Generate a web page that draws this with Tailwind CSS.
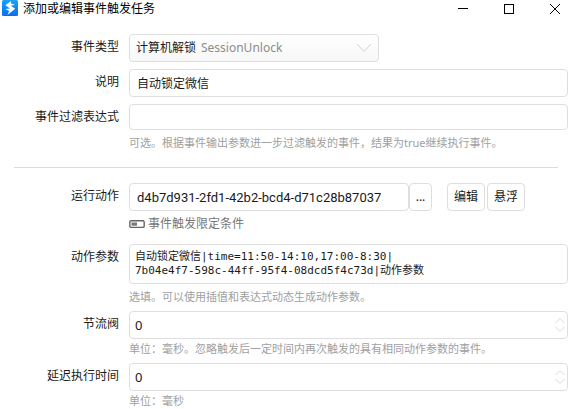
<!DOCTYPE html>
<html lang="zh-CN">
<head>
  <meta charset="UTF-8" />
  <meta name="viewport" content="width=device-width, initial-scale=1" />
  <title>添加或编辑事件触发任务</title>
  <script src="https://cdn.jsdelivr.net/npm/@tailwindcss/browser@4"></script>
</head>
<body class="bg-white text-[#1a1a1a] text-xs font-['Noto_Sans','Noto_Sans_CJK_SC',sans-serif] overflow-x-hidden">

  <!-- Barra de título -->
  <header class="flex items-center h-[18px] pl-[2px] text-black">
    <svg class="w-4 h-4 mb-[2px] shrink-0" viewBox="0 0 16 16">
      <defs>
        <linearGradient id="logo" x1="0" y1="0" x2="0" y2="1">
          <stop offset="0" stop-color="#18a4f8" />
          <stop offset="1" stop-color="#0a6cf0" />
        </linearGradient>
      </defs>
      <rect width="16" height="16" rx="1.5" fill="url(#logo)" />
      <path d="M9 1 3.4 5.2 8 8.4 3.4 9 7.2 11 5.4 15 13.2 8.8 8.8 5.8 12.8 4.8 9 3.4Z" fill="#fff" />
    </svg>
    <h1 class="ml-[5px] flex-1 leading-4">添加或编辑事件触发任务</h1>
    <div class="flex gap-[14px]">
      <button type="button" aria-label="最小化" class="w-8 h-4 flex items-center justify-center">
        <svg class="w-[10px] h-[10px]" viewBox="0 0 10 10" shape-rendering="crispEdges"><path d="M0 4.5H10" stroke="#000" /></svg>
      </button>
      <button type="button" aria-label="最大化" class="w-8 h-4 flex items-center justify-center">
        <svg class="w-[10px] h-[10px]" viewBox="0 0 10 10" shape-rendering="crispEdges"><path d="M.5 .5H9.5V9.5H.5Z" fill="none" stroke="#000" /></svg>
      </button>
      <button type="button" aria-label="关闭" class="w-8 h-4 flex items-center justify-center">
        <svg class="w-[10px] h-[10px]" viewBox="0 0 10 10"><path d="M0 0 10 10M10 0 0 10" stroke="#000" /></svg>
      </button>
    </div>
  </header>

  <form class="pt-4 pr-[3px]" onsubmit="event.preventDefault()">
    <!-- Evento -->
    <section class="flex flex-col gap-[7px]">
      <div class="flex gap-[10px]">
        <label for="tipo" class="w-[119px] shrink-0 text-right leading-[26px]">事件类型</label>
        <div class="grid w-[250px] items-center">
          <select id="tipo" class="col-start-1 row-start-1 appearance-none h-7 pl-[6px] rounded border border-[#dedede] bg-linear-to-b from-white to-[#f7f7f7]">
            <option>计算机解锁</option>
          </select>
          <span class="col-start-1 row-start-1 ml-[72px] text-[#8c8c8c] pointer-events-none">SessionUnlock</span>
          <svg class="col-start-1 row-start-1 justify-self-end mr-[7px] w-4 h-[10px] pointer-events-none" viewBox="0 0 16 10"><path d="M1 1 8 8.5 15 1" fill="none" stroke="#d4d4d4" /></svg>
        </div>
      </div>

      <div class="flex gap-[10px]">
        <label for="descripcion" class="w-[119px] shrink-0 text-right leading-[26px]">说明</label>
        <input id="descripcion" type="text" value="自动锁定微信" class="flex-1 min-w-0 h-7 px-[7px] rounded border border-[#dedede]">
      </div>

      <div class="flex gap-[10px]">
        <label for="filtro" class="w-[119px] shrink-0 text-right leading-[26px]">事件过滤表达式</label>
        <div class="flex-1 min-w-0">
          <input id="filtro" type="text" class="block w-full h-[26px] px-[7px] rounded border border-[#dedede]">
          <p class="mt-[5px] text-[11px] leading-4 text-[#a0a0a0]">可选。根据事件输出参数进一步过滤触发的事件，结果为true继续执行事件。</p>
        </div>
      </div>
    </section>

    <hr class="mt-4 ml-[14px] mr-[10px] border-[#dcdcdc]">

    <!-- Acción -->
    <section class="mt-[15px]">
      <div class="flex gap-[10px]">
        <label for="accion" class="w-[119px] shrink-0 text-right leading-[26px]">运行动作</label>
        <div class="flex-1 min-w-0">
          <div class="flex">
            <input id="accion" type="text" value="d4b7d931-2fd1-42b2-bcd4-d71c28b87037" class="w-[280px] h-7 px-[7px] rounded border border-[#dedede] font-[Roboto,sans-serif] text-[13px]">
            <button type="button" class="w-[23px] h-7 rounded border border-[#dedede]">...</button>
            <button type="button" class="ml-[15px] w-[38px] h-7 rounded border border-[#dedede]">编辑</button>
            <button type="button" class="ml-[2px] w-[38px] h-7 rounded border border-[#dedede]">悬浮</button>
          </div>
          <button type="button" class="mt-[5px] flex items-center gap-[3px] leading-4 text-[#777]">
            <svg class="w-4 h-[10px]" viewBox="0 0 16 10">
              <rect x=".8" y="1.8" width="14.4" height="6.6" rx="1.5" fill="#fff" stroke="#666" stroke-width="1.4" />
              <rect x="2.5" y="3.5" width="5.5" height="3.2" fill="#777" />
            </svg>
            事件触发限定条件
          </button>
        </div>
      </div>

      <div class="mt-3 flex gap-[10px]">
        <label for="parametros" class="w-[119px] shrink-0 text-right leading-[26px]">动作参数</label>
        <div class="flex-1 min-w-0">
          <textarea id="parametros" class="block w-full h-10 px-[5px] py-[5px] rounded border border-[#dedede] resize-none overflow-hidden font-['DejaVu_Sans_Mono','Noto_Sans_CJK_SC',monospace] text-[11px] leading-[14px]">自动锁定微信|time=11:50-14:10,17:00-8:30|
7b04e4f7-598c-44ff-95f4-08dcd5f4c73d|动作参数</textarea>
          <p class="mt-[5px] text-[11px] leading-4 text-[#a0a0a0]">选填。可以使用插值和表达式动态生成动作参数。</p>
        </div>
      </div>

      <div class="mt-[6px] flex gap-[10px]">
        <label for="limite" class="w-[119px] shrink-0 text-right leading-[26px]">节流阀</label>
        <div class="flex-1 min-w-0">
          <div class="flex items-center h-7 rounded border border-[#dedede]">
            <input id="limite" type="text" inputmode="numeric" value="0" class="flex-1 min-w-0 h-full px-[5px] text-[13px] outline-none">
            <svg class="w-[10px] h-[14px] mr-[2px]" viewBox="0 0 10 14"><path d="M.5 5 5 .5 9.5 5M.5 9 5 13.5 9.5 9" fill="none" stroke="#dadada" /></svg>
          </div>
          <p class="mt-[2px] text-[11px] leading-4 text-[#a0a0a0]">单位：毫秒。忽略触发后一定时间内再次触发的具有相同动作参数的事件。</p>
        </div>
      </div>

      <div class="mt-[6px] flex gap-[10px]">
        <label for="retraso" class="w-[119px] shrink-0 text-right leading-[26px]">延迟执行时间</label>
        <div class="flex-1 min-w-0">
          <div class="flex items-center h-7 rounded border border-[#dedede]">
            <input id="retraso" type="text" inputmode="numeric" value="0" class="flex-1 min-w-0 h-full px-[5px] text-[13px] outline-none">
            <svg class="w-[10px] h-[14px] mr-[2px]" viewBox="0 0 10 14"><path d="M.5 5 5 .5 9.5 5M.5 9 5 13.5 9.5 9" fill="none" stroke="#dadada" /></svg>
          </div>
          <p class="mt-[2px] text-[11px] leading-4 text-[#a0a0a0]">单位：毫秒</p>
        </div>
      </div>
    </section>
  </form>
</body>
</html>
